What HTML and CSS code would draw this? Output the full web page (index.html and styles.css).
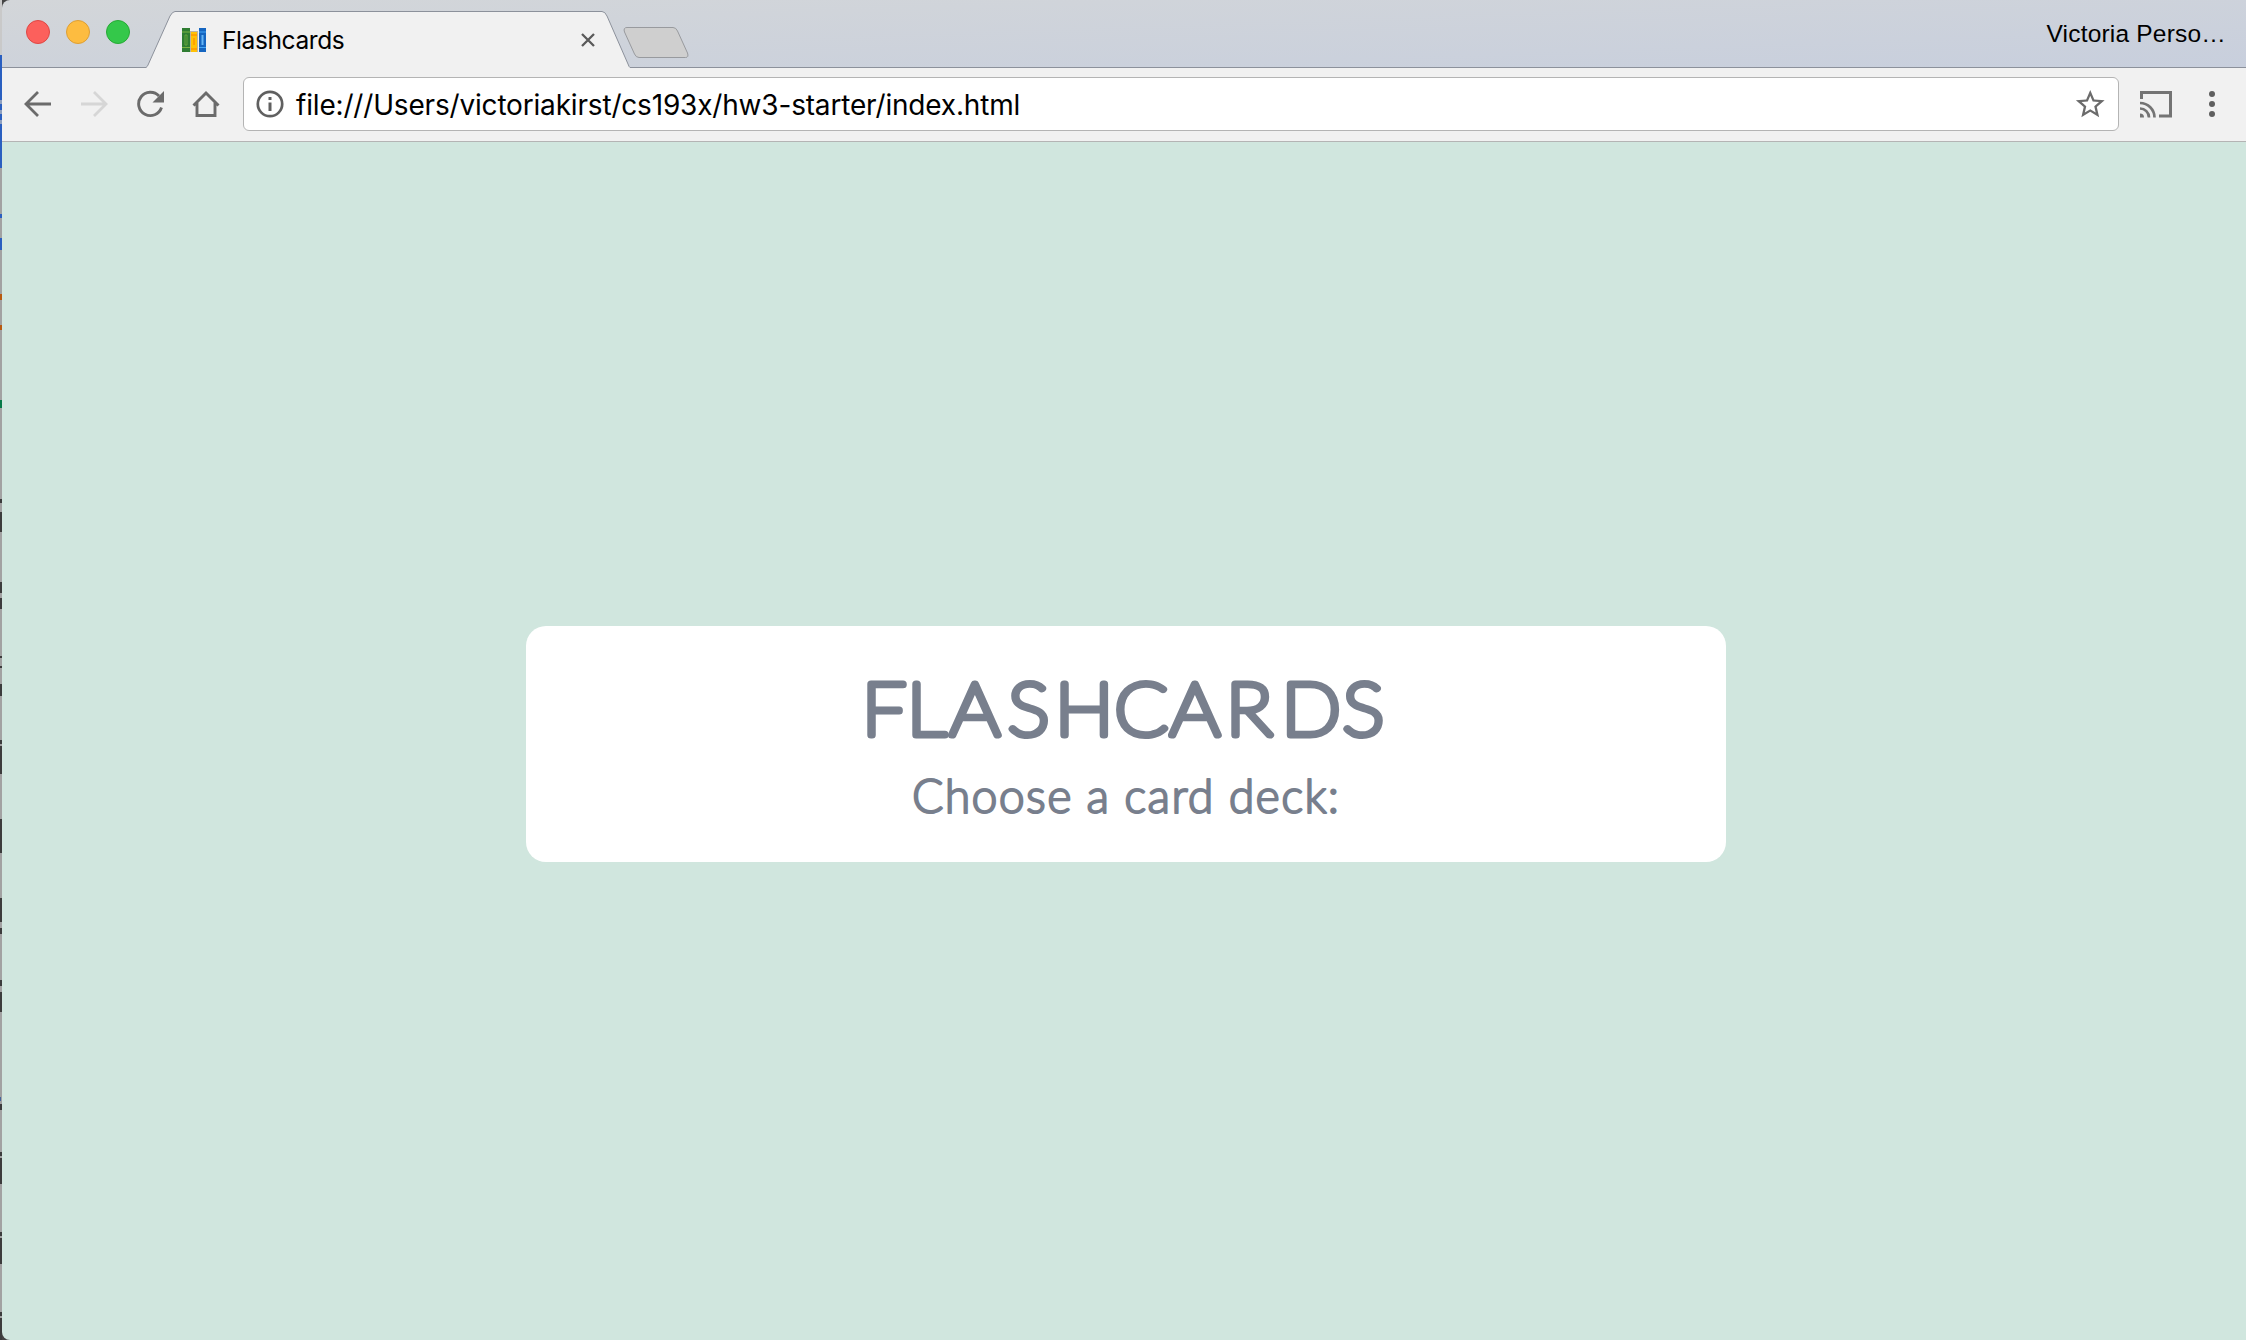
FILE: index.html
```html
<!DOCTYPE html>
<html lang="en">
<head>
<meta charset="utf-8">
<title>Flashcards</title>
<link rel="stylesheet" href="styles.css">
</head>
<body>
<div class="desktop">
  <svg class="backdrop" viewBox="0 0 2 1340" preserveAspectRatio="none" aria-hidden="true">
    <rect width="2" height="1340" fill="#a2a2a2"/>
    <rect width="2" height="55" fill="#c9c9c9"/>
    <rect y="55" width="2" height="113" fill="#2a5fc0"/>
    <path d="M0 102h2M0 112h2M0 122h2" stroke="#8fa0bf" stroke-width="4"/>
    <path d="M0 214h2v4H0zM0 238h2v12H0z" fill="#2a5fc0"/>
    <path d="M0 294h2v6H0zM0 325h2v5H0z" fill="#b85a10"/>
    <path d="M0 400h2v8H0z" fill="#067a48"/>
    <path d="M1 499v4M1 512v20M1 582v11M1 598v11M1 656v2M1 666v2M1 684v12M1 740v4M1 746v28M1 819v34M1 898v24M1 928v6M1 980v6M1 992v20M1 1104v6M1 1152v4M1 1158v26M1 1232v4M1 1238v26M1 1312v4M1 1318v22" stroke="#3c3c3c" stroke-width="2"/>
    <path d="M0 1097h1v4H0z" fill="#45659a"/>
  </svg>
  <div class="window">
    <header class="tabbar">
      <div class="lights"><i class="light close"></i><i class="light minimize"></i><i class="light zoom"></i></div>
      <div class="tab">
        <svg class="tab-shape" viewBox="0 0 484 57"><path d="M0 56.500Q1.500 55.500 2 54L24 5Q26.500 .5 29 .5H456Q459 .5 461 5L482 53Q483 56 484 56.500V57H0Z" fill="#f1f1f1"/><path d="M0 56.500Q1.500 55.500 2 54L24 5Q26.500 .5 29 .5H456Q459 .5 461 5L482 53Q483 56 484 56.500" fill="none" stroke="#8c919b"/></svg>
        <svg class="favicon" viewBox="0 0 24 24"><path d="M0 0h8v24H0z" fill="#2f7d32"/><path d="M0 4h8M0 19.500h8" stroke="#7cb342"/><path d="M3 7h2v10H3z" fill="none" stroke="#66a53b"/><path d="M8 3h8v21H8z" fill="#b9b4a5"/><path d="M9 4h6v20H9z" fill="#ffc107"/><path d="M9 7h6M9 21h6M12 10v7" stroke="#ff9800" stroke-width="1.500"/><path d="M17 0h7v24h-7z" fill="#1565c0"/><path d="M17 4h7M17 19.500h7" stroke="#42a5f5"/><path d="M20.500 7v10" stroke="#64b5f6" stroke-width="2"/></svg>
        <span class="tab-title">Flashcards</span>
        <svg class="tab-close" viewBox="0 0 14 14"><path d="M1 1l12 12M13 1L1 13" stroke="#5a5a5a" stroke-width="2.300"/></svg>
      </div>
      <svg class="new-tab" viewBox="0 0 66 32"><path d="M4 .5H50Q53 .5 54.500 4L64.500 26Q66 30.500 62.500 30.500H16Q13 30.500 11.500 27L1.500 5Q0 .5 4 .5Z" fill="#cfcfcf" stroke="#989a9e"/></svg>
      <span class="profile">Victoria Perso…</span>
    </header>
    <nav class="toolbar">
      <svg class="icon back" viewBox="0 0 28 28"><path d="M27 14H3M14 2L2 14l12 12" fill="none" stroke="#6b6b6b" stroke-width="2.800"/></svg>
      <svg class="icon forward" viewBox="0 0 28 28"><path d="M1 14h24M14 2l12 12-12 12" fill="none" stroke="#d6d6d6" stroke-width="2.800"/></svg>
      <svg class="icon reload" viewBox="0 0 28 28"><path d="M25.500 17.500A11.700 11.700 0 1 1 23 6" fill="none" stroke="#6b6b6b" stroke-width="2.900"/><path d="M28 1v11.500H16.500Z" fill="#6b6b6b"/></svg>
      <svg class="icon home" viewBox="0 0 28 28"><path d="M1.500 15.500L14 3l12.500 12.500M5 12.500V25.500H23V12.500" fill="none" stroke="#6b6b6b" stroke-width="2.900"/></svg>
      <div class="omnibox">
        <svg class="info" viewBox="0 0 28 28"><circle cx="14" cy="14" r="12.200" fill="none" stroke="#606060" stroke-width="2.700"/><path d="M12.500 7h3v3h-3zM12.500 12.500h3V21h-3z" fill="#606060"/></svg>
        <span class="url">file:///Users/victoriakirst/cs193x/hw3-starter/index.html</span>
        <svg class="star" viewBox="0 0 24 24"><path d="M22 9.240l-7.190-.62L12 2 9.190 8.630 2 9.240l5.460 4.730L5.820 21 12 17.270 18.180 21l-1.630-7.030L22 9.240zM12 15.400l-3.760 2.270 1-4.280-3.320-2.880 4.380-.38L12 6.100l1.710 4.040 4.380.38-3.320 2.880 1 4.280L12 15.400z" fill="#6b6b6b"/></svg>
      </div>
      <svg class="cast" viewBox="0 0 32 27"><path d="M1.500 8V1.500h29v23.500H19" fill="none" stroke="#747474" stroke-width="3"/><path d="M0 22.500A4 4 0 0 1 4 26.500H0Z" fill="#747474"/><path d="M0 17.500A9 9 0 0 1 9 26.500M0 12A14.500 14.500 0 0 1 14.500 26.500" fill="none" stroke="#747474" stroke-width="2.700"/></svg>
      <svg class="menu" viewBox="0 0 6 26"><g fill="#5f5f5f"><circle cx="3" cy="3" r="3"/><circle cx="3" cy="13" r="3"/><circle cx="3" cy="23" r="3"/></g></svg>
    </nav>
    <main class="page">
      <section class="card">
        <svg class="heading" viewBox="526 626 1200 236" role="img" aria-label="Flashcards. Choose a card deck:">
          <text class="title" transform="scale(1.07 1)" y="735.500" x="805.600 847.700 887.900 942.100 986 1041.500 1093.500 1145.800 1197.700 1255">FLASHCARDS</text>
          <text class="subtitle" y="813" x="912" textLength="427">Choose a card deck:</text>
        </svg>
      </section>
    </main>
  </div>
</div>
</body>
</html>
```

FILE: styles.css
```css
* { box-sizing: border-box; }
body { margin: 0; overflow: hidden; }
svg { display: block; flex: none; }
.desktop { display: flex; width: 2246px; height: 1340px; background: #444; }
.backdrop { width: 2px; height: 1340px; }
.window { display: flex; flex-direction: column; width: 2244px; border-radius: 8px 0 0 8px; overflow: hidden; }
.tabbar { display: flex; height: 68px; background: linear-gradient(178deg, #d3d6d9, #c8cfdd); border-bottom: 1px solid #8c919b; padding-left: 24px; }
.lights { display: flex; gap: 16px; margin-top: 20px; width: 120px; }
.light { width: 24px; height: 24px; border-radius: 50%; border: 1px solid; }
.close { background: #fc605c; border-color: #df4744; }
.minimize { background: #fdbc40; border-color: #de9f34; }
.zoom { background: #34c84a; border-color: #27aa35; }
.tab { position: relative; display: flex; align-items: center; width: 484px; height: 57px; margin-top: 11px; padding: 0 34px 0 36px; }
.tab-shape { position: absolute; left: 0; top: 0; width: 484px; height: 57px; }
.favicon { position: relative; width: 24px; height: 24px; margin-top: 1px; }
.tab-title { position: relative; margin-left: 16px; font: 24.500px/30px Inter, sans-serif; letter-spacing: -.4px; }
.tab-close { position: relative; width: 14px; height: 14px; margin-left: auto; margin-right: 1px; }
.new-tab { width: 66px; height: 32px; margin: 27px 0 0 -7px; }
.profile { margin: 19px 20px 0 auto; font: 24.500px/30px "Liberation Sans", sans-serif; letter-spacing: .2px; }
.toolbar { display: flex; height: 74px; background: #f1f1f1; border-bottom: 1px solid #b4b4b4; padding: 9px 31px 0 22px; }
.icon { width: 28px; height: 28px; margin: 13px 28px 0 0; }
.toolbar .home { margin-right: 23px; }
.omnibox { display: flex; align-items: center; width: 1876px; height: 54px; background: #fff; border: 1px solid #b4b4b4; border-radius: 6px; padding: 0 11px 0 12px; }
.info { width: 28px; height: 28px; }
.url { margin: 2px 0 0 12px; font: 28px/36px Inter, sans-serif; letter-spacing: -.18px; }
.star { width: 34.500px; height: 34.500px; margin-left: auto; }
.cast { width: 32px; height: 27px; margin: 14px 0 0 21px; }
.menu { width: 6px; height: 26px; margin: 14px 0 0 auto; }
.page { display: flex; flex: 1; justify-content: center; align-items: flex-start; background: #d0e6de; padding: 484px 0 0 4px; }
.card { width: 1200px; height: 236px; border-radius: 20px; background: #fff; }
.heading { width: 1200px; height: 236px; }
.title, .subtitle { fill: #787f8d; stroke: #787f8d; stroke-linejoin: round; stroke-linecap: round; font-family: Lato, sans-serif; }
.title { font-size: 73px; font-weight: 100; stroke-width: 7px; }
.subtitle { font-size: 46.500px; font-weight: 300; stroke-width: 2px; }
```
